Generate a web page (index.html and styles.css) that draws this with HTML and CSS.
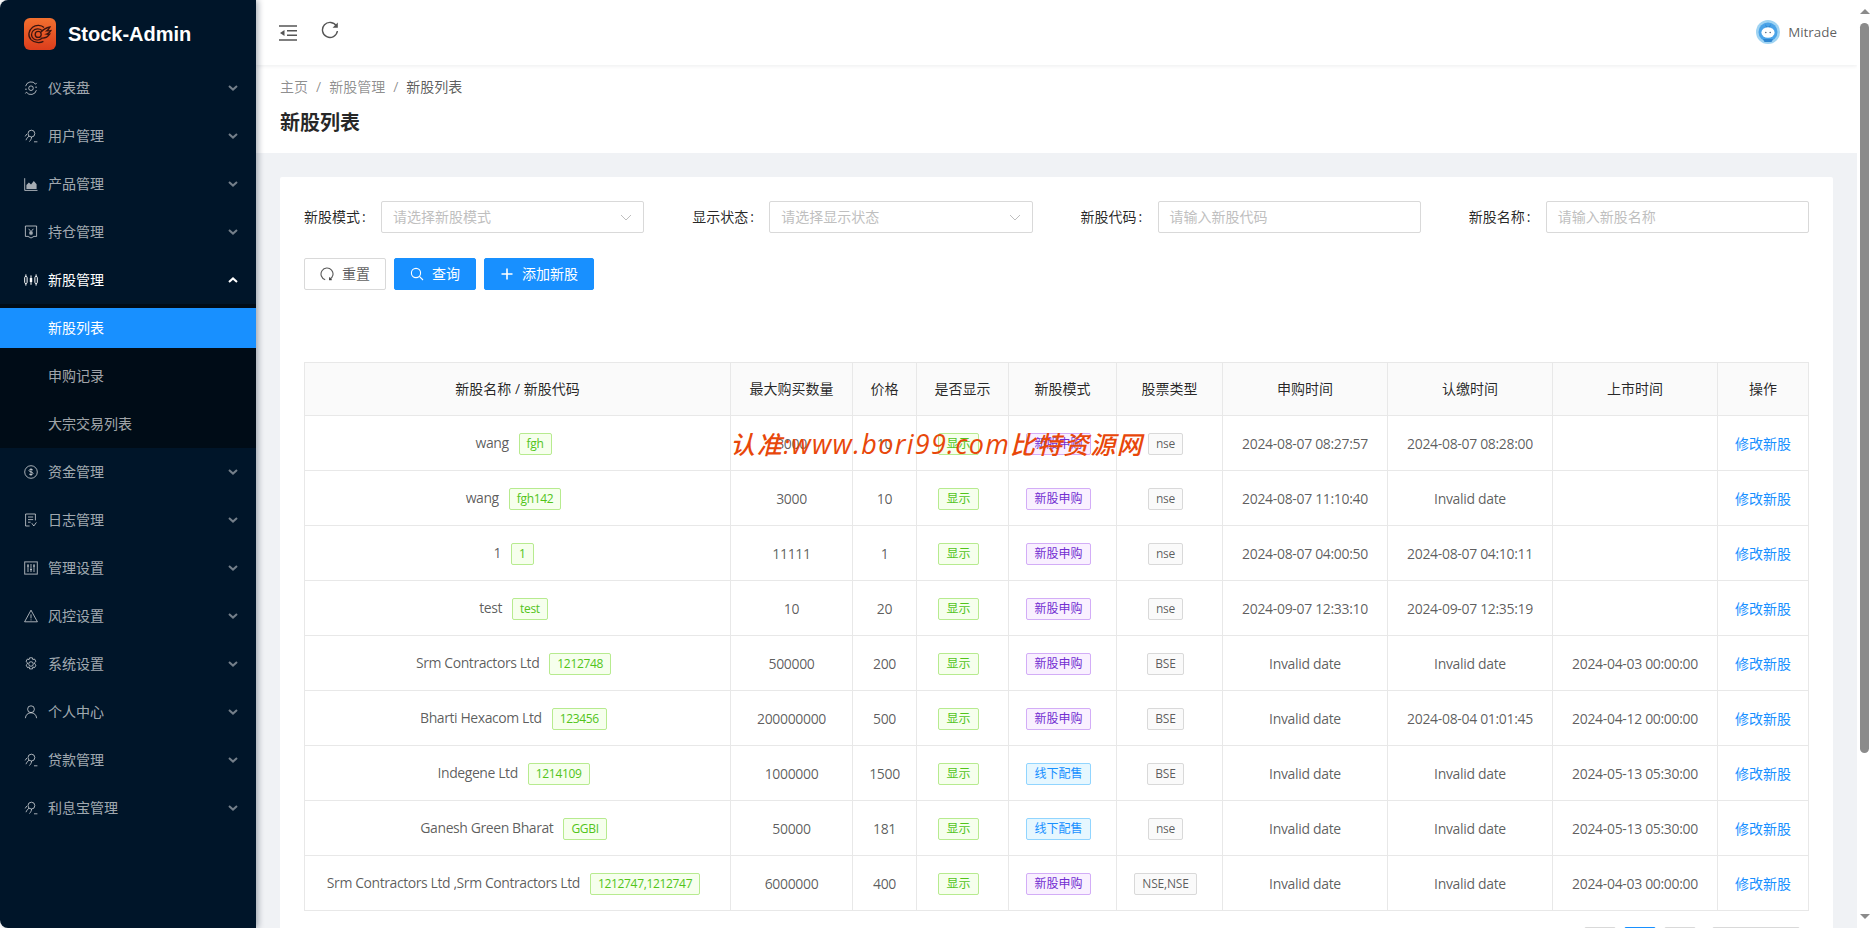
FILE: index.html
```html
<!DOCTYPE html>
<html lang="zh-CN">
<head>
<meta charset="utf-8">
<title>新股列表</title>
<link rel="stylesheet" href="styles.css">
</head>
<body>
<svg class="sprite" width="0" height="0">
  <defs>
    <symbol id="i-dash" viewBox="0 0 14 14"><circle cx="7" cy="7.2" r="2.3"/><path d="M1.6 5.2A5.6 5.6 0 0 1 11.6 3.2L12.6 1.9M12.4 9.2A5.6 5.6 0 0 1 2.4 11.2L1.4 12.5M2.8 8.2H1M13 6.2h-1.8"/></symbol>
    <symbol id="i-user" viewBox="0 0 14 14"><circle cx="7.4" cy="4.6" r="3.4"/><path d="M5 7.2C3.4 8.4 2.6 9.6 2 11.2M1.2 7.4 2.8 5M5.4 12.6C6.6 11.4 7.6 9.6 7.6 8M10 12.8h3.4"/></symbol>
    <symbol id="i-chart" viewBox="0 0 14 14"><path d="M.7 1.2v12.2h12.8"/><path class="solid" d="M2.4 12V8l2.5-2.6 2.1 2L9.8 4l2.8 3.2V12z"/></symbol>
    <symbol id="i-hold" viewBox="0 0 14 14"><path d="M1.4 1h11.2v10.4H10L7 13 4 11.4H1.4zM4.6 3.8 7 6.6l2.4-2.8M7 6.6v3.6M5 7.2h4M5 8.8h4"/></symbol>
    <symbol id="i-candle" viewBox="0 0 14 14"><rect x=".7" y="3.4" width="2.4" height="7.2" rx="1.2"/><rect x="5.8" y="5" width="2.4" height="4" class="solid"/><rect x="10.9" y="3.4" width="2.4" height="7.2" rx="1.2"/><path d="M1.9 1.4v2M1.9 10.6v2M7 2.4V5M7 9v2.8M12.1 1.4v2M12.1 10.6v2"/></symbol>
    <symbol id="i-dollar" viewBox="0 0 14 14"><circle cx="7" cy="7" r="6.3"/><path d="M9 5.2C8.7 4.2 5 3.9 5 5.5 5 7.4 9 6.4 9 8.4 9 10 5.3 9.9 5 8.8M7 3.2v7.6"/></symbol>
    <symbol id="i-log" viewBox="0 0 14 14"><path d="M5.6 13H1.6V1h9.8v6.4M4 4h5.2M4 6.6h5.2M4 9.2h2.6M7.8 10.2l2 2.8 2.6-3.6"/></symbol>
    <symbol id="i-sliders" viewBox="0 0 14 14"><rect x=".7" y=".9" width="12.6" height="12.2"/><path d="M4 3v8M7 3v8M10 3v8M3 5h2M6 8.6h2M9 5h2"/></symbol>
    <symbol id="i-warn" viewBox="0 0 14 14"><path d="M7 1.2 13.4 12.8H.6zM7 5.4v4M7 10.4v1"/></symbol>
    <symbol id="i-gear" viewBox="0 0 14 14"><circle cx="7" cy="7" r="2.3"/><path d="M5.6.8h2.8l.4 1.8 1.7-.6 1.4 2.4-1.3 1.2.1 1.4 1.3 1.2-1.4 2.4-1.7-.6-.4 1.9H5.6l-.4-1.9-1.7.6-1.4-2.4 1.3-1.2-.1-1.4-1.3-1.2 1.4-2.4 1.7.6z"/></symbol>
    <symbol id="i-person" viewBox="0 0 14 14"><circle cx="7" cy="4.2" r="3.4"/><path d="M1.4 13.2C1.600 9.800 4 7.800 7 7.800s5.400 2 5.600 5.400"/></symbol>
    <symbol id="i-down" viewBox="0 0 10 6"><path d="M1 1l4 3.600L9 1"/></symbol>
    <symbol id="i-up" viewBox="0 0 10 6"><path d="M1 5l4-3.600L9 5"/></symbol>
  </defs>
</svg>

<div class="app">
  <aside class="sidebar">
    <div class="brand">
      <svg class="logo" viewBox="0 0 32 32">
        <defs><linearGradient id="lg" x1="0" y1="0" x2="0" y2="1"><stop offset="0" stop-color="#f2702f"/><stop offset="1" stop-color="#dc3d1c"/></linearGradient></defs>
        <rect width="32" height="32" rx="6" fill="url(#lg)"/>
        <g fill="none" stroke="#3a1510" stroke-width="1.3">
          <path d="M20 9.500C17.500 7 12 6.600 8.600 9.200 4.400 12.500 3.600 18 7 21.600c3.400 3.400 9 3.600 12.400 1.800"/>
          <path d="M18 12.400c-2.400-2-6.600-2-8.800.2-2.400 2.400-2.200 6.200.4 8.200 2.600 1.800 6.200 1.400 8.400-.6"/>
          <circle cx="14.200" cy="16.400" r="3"/>
          <path d="M17 14.200c2-2.600 4.600-4.400 9-5.200-.8 1.600-1.800 2.800-3.200 3.800 1.400 0 2.600 0 4-.2-1 1.800-2.400 3-4.200 3.600 1 .2 2 .2 3 0-1.600 2.600-4.600 4.200-8.200 3.800"/>
        </g>
      </svg>
      <span class="brand-name">Stock-Admin</span>
    </div>
    <nav class="menu">
      <a class="menu-item"><svg class="mi"><use href="#i-dash"/></svg><span class="mt">仪表盘</span><svg class="chev"><use href="#i-down"/></svg></a>
      <a class="menu-item"><svg class="mi"><use href="#i-user"/></svg><span class="mt">用户管理</span><svg class="chev"><use href="#i-down"/></svg></a>
      <a class="menu-item"><svg class="mi"><use href="#i-chart"/></svg><span class="mt">产品管理</span><svg class="chev"><use href="#i-down"/></svg></a>
      <a class="menu-item"><svg class="mi"><use href="#i-hold"/></svg><span class="mt">持仓管理</span><svg class="chev"><use href="#i-down"/></svg></a>
      <a class="menu-item open"><svg class="mi"><use href="#i-candle"/></svg><span class="mt">新股管理</span><svg class="chev"><use href="#i-up"/></svg></a>
      <div class="submenu">
        <a class="sub-item active">新股列表</a>
        <a class="sub-item">申购记录</a>
        <a class="sub-item">大宗交易列表</a>
      </div>
      <a class="menu-item"><svg class="mi"><use href="#i-dollar"/></svg><span class="mt">资金管理</span><svg class="chev"><use href="#i-down"/></svg></a>
      <a class="menu-item"><svg class="mi"><use href="#i-log"/></svg><span class="mt">日志管理</span><svg class="chev"><use href="#i-down"/></svg></a>
      <a class="menu-item"><svg class="mi"><use href="#i-sliders"/></svg><span class="mt">管理设置</span><svg class="chev"><use href="#i-down"/></svg></a>
      <a class="menu-item"><svg class="mi"><use href="#i-warn"/></svg><span class="mt">风控设置</span><svg class="chev"><use href="#i-down"/></svg></a>
      <a class="menu-item"><svg class="mi"><use href="#i-gear"/></svg><span class="mt">系统设置</span><svg class="chev"><use href="#i-down"/></svg></a>
      <a class="menu-item"><svg class="mi"><use href="#i-person"/></svg><span class="mt">个人中心</span><svg class="chev"><use href="#i-down"/></svg></a>
      <a class="menu-item"><svg class="mi"><use href="#i-user"/></svg><span class="mt">贷款管理</span><svg class="chev"><use href="#i-down"/></svg></a>
      <a class="menu-item"><svg class="mi"><use href="#i-user"/></svg><span class="mt">利息宝管理</span><svg class="chev"><use href="#i-down"/></svg></a>
    </nav>
  </aside>

  <div class="main">
    <header class="topbar">
      <svg class="tool-collapse" viewBox="0 0 18 16"><path d="M0 1h18M8 5.700h10M8 10.300h10M0 15h18"/><path class="solid" d="M5.500 5v6L1 8z"/></svg>
      <svg class="tool-refresh" viewBox="0 0 18 18"><path d="M15.500 5.200A7.500 7.500 0 1 0 16.400 10"/><path class="solid" d="M16.800 1.500v5.200h-5.200z"/></svg>
      <div class="account">
        <svg class="avatar" viewBox="0 0 24 24">
          <circle cx="12" cy="12" r="12" fill="#9fd3f2"/>
          <circle cx="12" cy="12" r="9.500" fill="#4aa3e8"/>
          <path d="M9 4l2 2.500h2L15 4l-1 3.500h-4z" fill="#2f86d0"/>
          <ellipse cx="12" cy="12.500" rx="6.600" ry="5.200" fill="#fff"/>
          <circle cx="9.800" cy="12.500" r=".8" fill="#5a6a80"/>
          <circle cx="14.200" cy="12.500" r=".8" fill="#5a6a80"/>
          <path d="M7 19h10l-1.500 3h-7z" fill="#2f86d0"/>
        </svg>
        <span class="account-name">Mitrade</span>
      </div>
    </header>

    <section class="page-head">
      <div class="crumbs"><span>主页</span><i>/</i><span>新股管理</span><i>/</i><span class="crumb-now">新股列表</span></div>
      <h1 class="page-title">新股列表</h1>
    </section>

    <div class="content">
      <div class="card">
        <form class="filters">
          <div class="field"><label class="field-label">新股模式<span class="colon">:</span></label><div class="control select"><span class="ph">请选择新股模式</span><svg class="sel-arrow" viewBox="0 0 12 7"><path d="M1 1l5 5 5-5"/></svg></div></div>
          <div class="field"><label class="field-label">显示状态<span class="colon">:</span></label><div class="control select"><span class="ph">请选择显示状态</span><svg class="sel-arrow" viewBox="0 0 12 7"><path d="M1 1l5 5 5-5"/></svg></div></div>
          <div class="field"><label class="field-label">新股代码<span class="colon">:</span></label><div class="control"><span class="ph">请输入新股代码</span></div></div>
          <div class="field"><label class="field-label">新股名称<span class="colon">:</span></label><div class="control"><span class="ph">请输入新股名称</span></div></div>
        </form>
        <div class="actions">
          <button class="btn" type="button"><svg class="bi" viewBox="0 0 14 14"><path d="M5.200 12.700A6 6 0 1 1 9.600 12.400"/><path d="M9.600 10.200v2.400h2.200"/></svg>重置</button>
          <button class="btn primary" type="button"><svg class="bi" viewBox="0 0 14 14"><circle cx="6" cy="6" r="4.600"/><path d="M9.400 9.400L13 13"/></svg>查询</button>
          <button class="btn primary" type="button"><svg class="bi plus" viewBox="0 0 14 14"><path d="M7 1.500v11M1.500 7h11"/></svg>添加新股</button>
        </div>

        <table class="grid">
          <colgroup>
            <col class="c-name"><col class="c-max"><col class="c-price"><col class="c-show"><col class="c-mode"><col class="c-type"><col class="c-date"><col class="c-date"><col class="c-date"><col class="c-op">
          </colgroup>
          <thead>
            <tr><th>新股名称 / 新股代码</th><th>最大购买数量</th><th>价格</th><th>是否显示</th><th>新股模式</th><th>股票类型</th><th>申购时间</th><th>认缴时间</th><th>上市时间</th><th>操作</th></tr>
          </thead>
          <tbody>
            <tr><td><span class="name">wang</span><span class="tag green code">fgh</span></td><td class="lat">3000</td><td class="lat">10</td><td><span class="tag green">显示</span></td><td><span class="tag purple">新股申购</span></td><td><span class="tag gray">nse</span></td><td class="lat">2024-08-07 08:27:57</td><td class="lat">2024-08-07 08:28:00</td><td></td><td><a class="link">修改新股</a></td></tr>
            <tr><td><span class="name">wang</span><span class="tag green code">fgh142</span></td><td class="lat">3000</td><td class="lat">10</td><td><span class="tag green">显示</span></td><td><span class="tag purple">新股申购</span></td><td><span class="tag gray">nse</span></td><td class="lat">2024-08-07 11:10:40</td><td class="lat">Invalid date</td><td></td><td><a class="link">修改新股</a></td></tr>
            <tr><td><span class="name">1</span><span class="tag green code">1</span></td><td class="lat">11111</td><td class="lat">1</td><td><span class="tag green">显示</span></td><td><span class="tag purple">新股申购</span></td><td><span class="tag gray">nse</span></td><td class="lat">2024-08-07 04:00:50</td><td class="lat">2024-08-07 04:10:11</td><td></td><td><a class="link">修改新股</a></td></tr>
            <tr><td><span class="name">test</span><span class="tag green code">test</span></td><td class="lat">10</td><td class="lat">20</td><td><span class="tag green">显示</span></td><td><span class="tag purple">新股申购</span></td><td><span class="tag gray">nse</span></td><td class="lat">2024-09-07 12:33:10</td><td class="lat">2024-09-07 12:35:19</td><td></td><td><a class="link">修改新股</a></td></tr>
            <tr><td><span class="name">Srm Contractors Ltd</span><span class="tag green code">1212748</span></td><td class="lat">500000</td><td class="lat">200</td><td><span class="tag green">显示</span></td><td><span class="tag purple">新股申购</span></td><td><span class="tag gray">BSE</span></td><td class="lat">Invalid date</td><td class="lat">Invalid date</td><td class="lat">2024-04-03 00:00:00</td><td><a class="link">修改新股</a></td></tr>
            <tr><td><span class="name">Bharti Hexacom Ltd</span><span class="tag green code">123456</span></td><td class="lat">200000000</td><td class="lat">500</td><td><span class="tag green">显示</span></td><td><span class="tag purple">新股申购</span></td><td><span class="tag gray">BSE</span></td><td class="lat">Invalid date</td><td class="lat">2024-08-04 01:01:45</td><td class="lat">2024-04-12 00:00:00</td><td><a class="link">修改新股</a></td></tr>
            <tr><td><span class="name">Indegene Ltd</span><span class="tag green code">1214109</span></td><td class="lat">1000000</td><td class="lat">1500</td><td><span class="tag green">显示</span></td><td><span class="tag blue">线下配售</span></td><td><span class="tag gray">BSE</span></td><td class="lat">Invalid date</td><td class="lat">Invalid date</td><td class="lat">2024-05-13 05:30:00</td><td><a class="link">修改新股</a></td></tr>
            <tr><td><span class="name">Ganesh Green Bharat</span><span class="tag green code">GGBI</span></td><td class="lat">50000</td><td class="lat">181</td><td><span class="tag green">显示</span></td><td><span class="tag blue">线下配售</span></td><td><span class="tag gray">nse</span></td><td class="lat">Invalid date</td><td class="lat">Invalid date</td><td class="lat">2024-05-13 05:30:00</td><td><a class="link">修改新股</a></td></tr>
            <tr><td><span class="name">Srm Contractors Ltd ,Srm Contractors Ltd</span><span class="tag green code">1212747,1212747</span></td><td class="lat">6000000</td><td class="lat">400</td><td><span class="tag green">显示</span></td><td><span class="tag purple">新股申购</span></td><td><span class="tag gray">NSE,NSE</span></td><td class="lat">Invalid date</td><td class="lat">Invalid date</td><td class="lat">2024-04-03 00:00:00</td><td><a class="link">修改新股</a></td></tr>
          </tbody>
        </table>

        <div class="pager">
          <span class="pg"></span><span class="pg current">1</span><span class="pg"></span><span class="pg wide"></span>
        </div>
      </div>
    </div>
  </div>

  <div class="scrollbar">
    <span class="sb-up"></span>
    <div class="sb-track"><div class="sb-thumb"></div></div>
    <span class="sb-down"></span>
  </div>

  <div class="watermark">认准:<span class="wm-lat">www.bori99.com</span>比特资源网</div>
</div>
</body>
</html>
```
FILE: styles.css
```css
* { box-sizing: border-box; }
html, body { margin: 0; height: 100%; overflow: hidden; background: #fff; }
body {
  font-family: "Open Sans", "Noto Sans CJK SC", sans-serif;
  font-size: 14px;
  color: rgba(0, 0, 0, .65);
}
.sprite { position: absolute; }
.app { position: relative; display: flex; width: 1872px; height: 928px; overflow: hidden; }

/* sidebar */
.sidebar {
  flex: 0 0 256px;
  background: #001529;
  border-radius: 8px 0 0 8px;
  box-shadow: 2px 0 6px rgba(0, 21, 41, .35);
  position: relative;
  z-index: 2;
}
.brand { display: flex; align-items: center; height: 64px; padding: 4px 0 0 24px; }
.logo { width: 32px; height: 32px; display: block; }
.brand-name {
  margin-left: 12px;
  font: 700 20px/32px "Liberation Sans", Arial, sans-serif;
  color: #fff;
}
.menu { display: flex; flex-direction: column; }
.menu-item {
  display: flex;
  align-items: center;
  height: 40px;
  margin: 4px 0;
  padding-left: 24px;
  color: rgba(255, 255, 255, .65);
  line-height: 40px;
}
.menu-item.open { color: #fff; }
.mi { width: 14px; height: 14px; fill: none; stroke: currentColor; stroke-width: 1; flex: none; }
.solid { fill: currentColor; stroke: none; }
.mt { margin-left: 10px; flex: 1; }
.chev { width: 10px; height: 6px; margin-right: 18px; fill: none; stroke: rgba(255, 255, 255, .45); stroke-width: 2; flex: none; }
.open .chev { stroke: #fff; }
.submenu { background: #000c17; padding: 4px 0; display: flex; flex-direction: column; gap: 8px; }
.sub-item { display: block; height: 40px; line-height: 40px; padding-left: 48px; color: rgba(255, 255, 255, .65); }
.sub-item.active { background: #1890ff; color: #fff; }

/* main */
.main { flex: 1; min-width: 0; height: 928px; overflow: hidden; background: #f0f2f5; }
.topbar {
  display: flex;
  align-items: center;
  height: 65px;
  padding: 0 20px 0 23px;
  background: #fff;
  box-shadow: 0 1px 4px rgba(0, 21, 41, .08);
  position: relative;
}
.tool-collapse { width: 18px; height: 16px; fill: none; stroke: #555; stroke-width: 1.6; }
.tool-collapse .solid, .tool-refresh .solid { fill: #555; }
.tool-refresh { width: 18px; height: 18px; margin: -6px 0 0 24px; fill: none; stroke: #555; stroke-width: 1.4; }
.account { margin: -2px 0 0 auto; display: flex; align-items: center; }
.avatar { width: 24px; height: 24px; display: block; }
.account-name { margin-left: 8px; font-size: 13.4px; line-height: 22px; }

.page-head { height: 88px; padding: 11px 24px 0; background: #fff; }
.crumbs { display: flex; height: 22px; line-height: 22px; color: rgba(0, 0, 0, .45); font-size: 14px; }
.crumbs i { font-style: normal; padding: 0 8px; }
.crumb-now { color: rgba(0, 0, 0, .65); }
.page-title { margin: 11px 0 0; font-size: 20px; line-height: 28px; font-weight: 700; color: rgba(0, 0, 0, .85); }

.content { padding: 24px 24px 0; }
.card { background: #fff; padding: 24px 24px 0; border-radius: 2px; }

.filters { display: grid; grid-template-columns: repeat(4, 1fr); column-gap: 48px; }
.field { display: flex; align-items: center; }
.field-label { flex: 0 0 77px; color: rgba(0, 0, 0, .85); line-height: 32px; }
.colon { margin-left: 2px; }
.control {
  flex: 1;
  display: flex;
  align-items: center;
  justify-content: space-between;
  height: 32px;
  padding: 0 11px;
  border: 1px solid #d9d9d9;
  border-radius: 2px;
  background: #fff;
}
.ph { color: #bfbfbf; line-height: 30px; }
.sel-arrow { width: 12px; height: 7px; fill: none; stroke: #bfbfbf; stroke-width: 1; }

.actions { display: flex; gap: 8px; margin-top: 25px; }
.btn {
  display: inline-flex;
  align-items: center;
  height: 32px;
  padding: 0 15px;
  font: inherit;
  line-height: 30px;
  color: rgba(0, 0, 0, .65);
  background: #fff;
  border: 1px solid #d9d9d9;
  border-radius: 2px;
}
.btn.primary { background: #1890ff; border-color: #1890ff; color: #fff; }
.bi { width: 14px; height: 14px; margin-right: 8px; fill: none; stroke: currentColor; stroke-width: 1.1; }
.bi.plus { stroke-width: 1.6; }

/* table */
.grid {
  width: 1505px;
  margin-top: 72px;
  table-layout: fixed;
  border-collapse: separate;
  border-spacing: 0;
  border-top: 1px solid #e8e8e8;
  border-left: 1px solid #e8e8e8;
}
.c-name { width: 426px; }
.c-max { width: 122px; }
.c-price { width: 64px; }
.c-show { width: 92px; }
.c-mode { width: 108px; }
.c-type { width: 106px; }
.c-date { width: 165px; }
.c-op { width: 91px; }
.grid th, .grid td {
  border-right: 1px solid #e8e8e8;
  border-bottom: 1px solid #e8e8e8;
  text-align: center;
  padding: 0;
  height: 55px;
  line-height: 22px;
  white-space: nowrap;
}
.grid td { padding-top: 1px; }
.grid th { height: 53px; background: #fafafa; font-weight: 400; color: rgba(0, 0, 0, .85); }
.lat { letter-spacing: -.33px; }
.name { letter-spacing: -.42px; }
.tag {
  display: inline-block;
  height: 22px;
  padding: 0 7px;
  margin-right: 8px;
  border: 1px solid;
  border-radius: 2px;
  font-size: 12px;
  line-height: 20px;
  vertical-align: middle;
}
.code { margin-left: 10px; letter-spacing: -.33px; }
.green { background: #f6ffed; border-color: #b7eb8f; color: #52c41a; }
.purple { background: #f9f0ff; border-color: #d3adf7; color: #722ed1; }
.blue { background: #e6f7ff; border-color: #91d5ff; color: #1890ff; }
.gray { background: #fafafa; border-color: #d9d9d9; color: rgba(0, 0, 0, .65); letter-spacing: -.2px; }
.link { color: #1890ff; }

.pager { display: flex; justify-content: flex-end; gap: 8px; margin: 16px 9px 0 0; }
.pg { width: 32px; height: 32px; border: 1px solid #d9d9d9; border-radius: 2px; background: #fff; text-align: center; line-height: 30px; }
.pg.current { border-color: #1890ff; color: #1890ff; }
.pg.wide { width: 88px; margin-left: 8px; }

/* window scrollbar */
.scrollbar { flex: 0 0 15px; display: flex; flex-direction: column; align-items: center; background: #fff; }
.sb-up, .sb-down { flex: none; width: 0; height: 0; border-left: 5px solid transparent; border-right: 5px solid transparent; }
.sb-up { margin-top: 9px; border-bottom: 5px solid #8b8b8b; }
.sb-down { margin-bottom: 9px; border-top: 5px solid #8b8b8b; }
.sb-track { flex: 1; width: 100%; display: flex; justify-content: center; padding-top: 9px; }
.sb-thumb { width: 9px; height: 730px; border-radius: 5px; background: #8b8b8b; }

.watermark {
  position: absolute;
  left: 730px;
  top: 426px;
  font-family: "Open Sans", "Noto Sans CJK SC", sans-serif;
  font-size: 25px;
  font-weight: 500;
  letter-spacing: 1.7px;
  line-height: 36px;
  font-style: italic;
  color: #e8470a;
  white-space: nowrap;
  z-index: 3;
}
.wm-lat { font-size: 27px; letter-spacing: 1.3px; }
```
